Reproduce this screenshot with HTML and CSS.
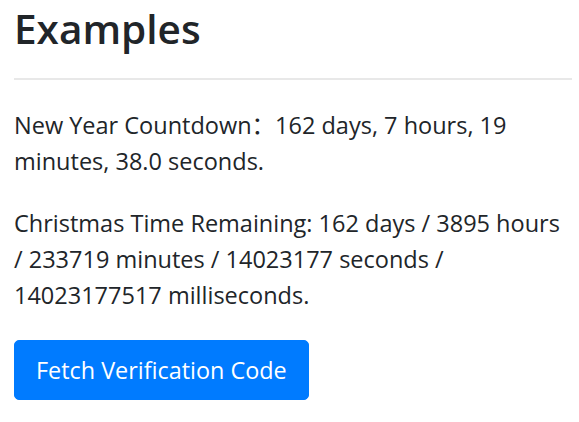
FILE: index.html
```html
<!DOCTYPE html>
<html lang="en">
<head>
    <meta charset="utf-8">
    <title>Examples</title>
    <link rel="stylesheet" href="styles.css">
</head>
<body>
<div class="container">
    <h1>Examples</h1>
    <hr class="divider">
    <p id="new-year">New Year Countdown：162 days, 7 hours, 19 minutes, 38.0 seconds.</p>
    <p id="christmas">Christmas Time Remaining: 162 days / 3895 hours / 233719 minutes / 14023177 seconds / 14023177517 milliseconds.</p>
    <button class="btn-primary" id="fetch-code">Fetch Verification Code</button>
</div>
</body>
</html>
```
FILE: styles.css
```css
body {
    margin: 0;
    font-family: "Open Sans", "Noto Sans CJK SC", sans-serif;
    color: #212529;
    background-color: #fff;
}
.container {
    padding: 3.5px 7px 0 14px;
}
h1 {
    margin: 0;
    font-size: 40.5px;
    font-weight: 600;
    line-height: 50.4px;
}
.divider {
    margin: 24px 0 27px;
    border: none;
    border-top: 2px solid #e8e8e8;
}
.container p {
    margin: 0 0 26.4px;
    font-size: 23.5px;
    line-height: 36px;
}
.btn-primary {
    padding: 11px 21px;
    font-family: inherit;
    font-size: 23.4px;
    line-height: 36px;
    color: #fff;
    background-color: #007bff;
    border: 1px solid #007bff;
    border-radius: 5px;
    cursor: pointer;
}
```
